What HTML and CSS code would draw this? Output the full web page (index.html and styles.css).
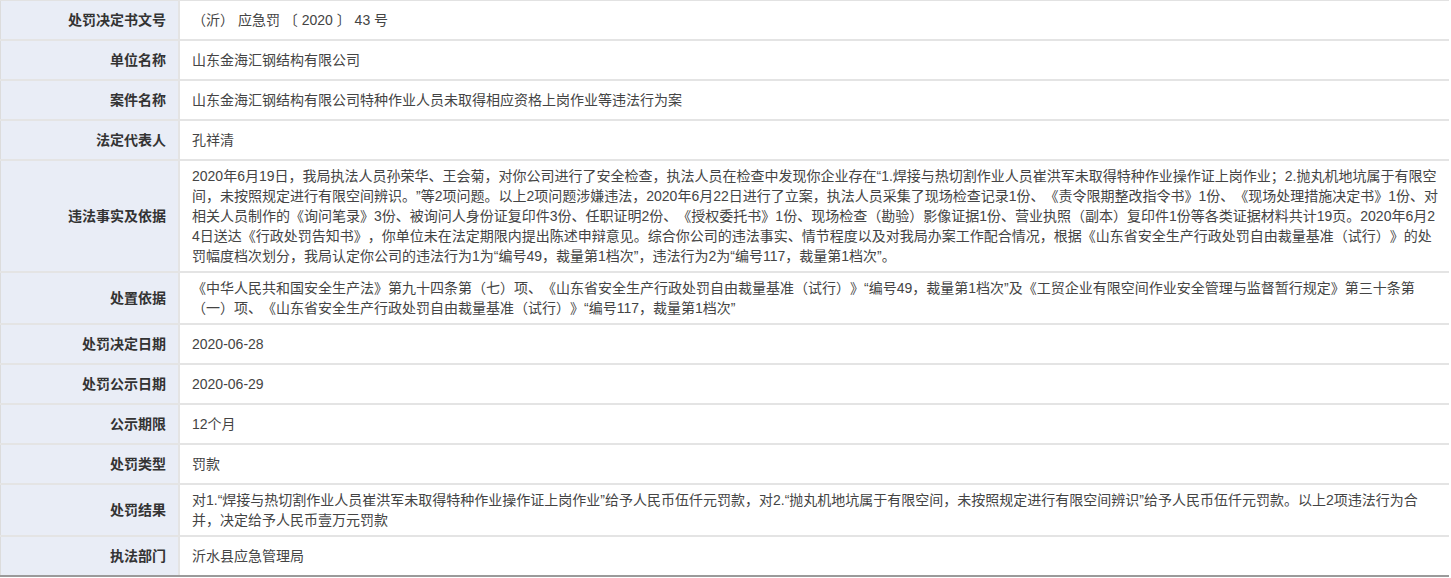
FILE: index.html
```html
<!DOCTYPE html>
<html lang="zh-CN">
<head>
<meta charset="utf-8">
<title>行政处罚信息</title>
<link rel="stylesheet" href="styles.css">
</head>
<body>
<table class="info_table">
  <tr><th>处罚决定书文号</th><td>（沂） 应急罚 〔 2020 〕 43 号</td></tr>
  <tr><th>单位名称</th><td>山东金海汇钢结构有限公司</td></tr>
  <tr><th>案件名称</th><td>山东金海汇钢结构有限公司特种作业人员未取得相应资格上岗作业等违法行为案</td></tr>
  <tr><th>法定代表人</th><td>孔祥清</td></tr>
  <tr><th>违法事实及依据</th><td>2020年6月19日，我局执法人员孙荣华、王会菊，对你公司进行了安全检查，执法人员在检查中发现你企业存在“1.焊接与热切割作业人员崔洪军未取得特种作业操作证上岗作业；2.抛丸机地坑属于有限空间，未按照规定进行有限空间辨识。”等2项问题。以上2项问题涉嫌违法，2020年6月22日进行了立案，执法人员采集了现场检查记录1份、《责令限期整改指令书》1份、《现场处理措施决定书》1份、对相关人员制作的《询问笔录》3份、被询问人身份证复印件3份、任职证明2份、《授权委托书》1份、现场检查（勘验）影像证据1份、营业执照（副本）复印件1份等各类证据材料共计19页。2020年6月24日送达《行政处罚告知书》，你单位未在法定期限内提出陈述申辩意见。综合你公司的违法事实、情节程度以及对我局办案工作配合情况，根据《山东省安全生产行政处罚自由裁量基准（试行）》的处罚幅度档次划分，我局认定你公司的违法行为1为“编号49，裁量第1档次”，违法行为2为“编号117，裁量第1档次”。</td></tr>
  <tr><th>处置依据</th><td>《中华人民共和国安全生产法》第九十四条第（七）项、《山东省安全生产行政处罚自由裁量基准（试行）》“编号49，裁量第1档次”及《工贸企业有限空间作业安全管理与监督暂行规定》第三十条第（一）项、《山东省安全生产行政处罚自由裁量基准（试行）》“编号117，裁量第1档次”</td></tr>
  <tr><th>处罚决定日期</th><td>2020-06-28</td></tr>
  <tr><th>处罚公示日期</th><td>2020-06-29</td></tr>
  <tr><th>公示期限</th><td>12个月</td></tr>
  <tr><th>处罚类型</th><td>罚款</td></tr>
  <tr><th>处罚结果</th><td>对1.“焊接与热切割作业人员崔洪军未取得特种作业操作证上岗作业”给予人民币伍仟元罚款，对2.“抛丸机地坑属于有限空间，未按照规定进行有限空间辨识”给予人民币伍仟元罚款。以上2项违法行为合并，决定给予人民币壹万元罚款</td></tr>
  <tr class="last_row"><th>执法部门</th><td>沂水县应急管理局</td></tr>
</table>
</body>
</html>
```

FILE: styles.css
```css
body {
  margin: 0;
  background: #ffffff;
  font-family: "Liberation Sans", "Noto Sans CJK SC", sans-serif;
  font-size: 14px;
  color: #333333;
  text-spacing-trim: space-all;
}

.info_table {
  width: 1449px;
  border-collapse: collapse;
  border-top: 1px solid #e2e2e2;
  border-left: 1px solid #dcdcdc;
}

.info_table th,
.info_table td {
  height: 28px;
  padding: 5px 12px;
  line-height: 20px;
  border-bottom: 2px solid #e4e4e4;
  vertical-align: middle;
}

.info_table th {
  width: 153px;
  background: #e9edf6;
  text-align: right;
  font-weight: bold;
  color: #333333;
  border-right: 2px solid #e4e4e4;
  white-space: nowrap;
}

.info_table td {
  padding-left: 12px;
  padding-right: 9px;
  text-align: left;
  color: #444444;
  background: #ffffff;
  word-break: break-all;
}

.info_table .last_row th,
.info_table .last_row td {
  border-bottom: 2px solid #9a9a9a;
}
```
